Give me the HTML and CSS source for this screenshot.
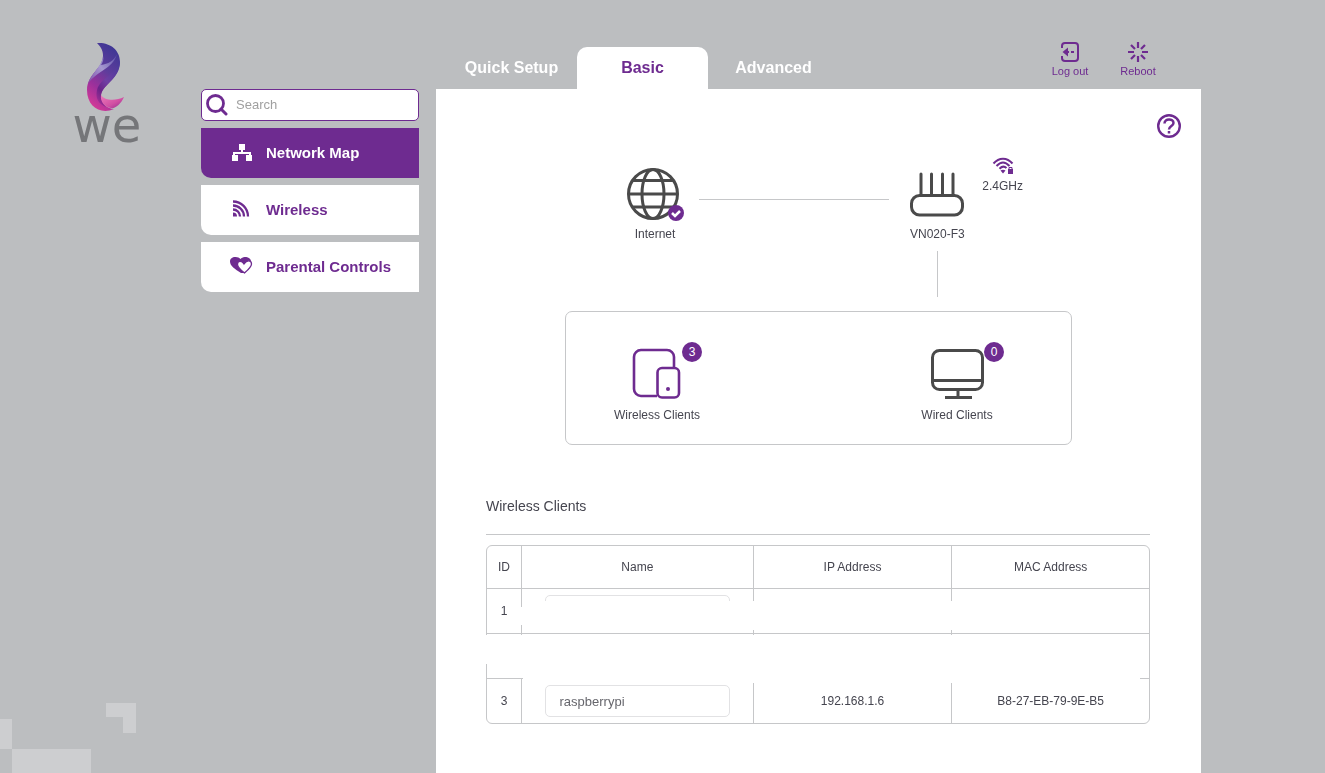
FILE: index.html
```html
<!DOCTYPE html>
<html lang="en">
<head>
<meta charset="utf-8">
<title>Network Map</title>
<link rel="stylesheet" href="styles.css">
</head>
<body>
<svg class="backdrop" width="140" height="72" viewBox="0 0 140 72" aria-hidden="true"><path d="M0 18h12v30H0zM12 48h79v24H12zM106 2h30v30h-13V16h-17z" fill="#cdced0"/></svg>
<div class="page">
  <div class="logo">
    <svg width="42" height="70" viewBox="0 0 42 70" aria-hidden="true">
      <defs>
        <linearGradient id="flame" x1="0.7" y1="0" x2="0.3" y2="1">
          <stop offset="0" stop-color="#3d3694"/><stop offset="0.4" stop-color="#5f3d9c"/><stop offset="0.7" stop-color="#9c309b"/><stop offset="1" stop-color="#d63a97"/>
        </linearGradient>
        <linearGradient id="fold" x1="1" y1="0" x2="0" y2="1">
          <stop offset="0" stop-color="#5a4ca6"/><stop offset="0.5" stop-color="#a698d0"/><stop offset="1" stop-color="#7d4aa8"/>
        </linearGradient>
        <linearGradient id="core" x1="0.8" y1="0" x2="0.2" y2="1">
          <stop offset="0" stop-color="#4a3a9a"/><stop offset="0.5" stop-color="#6f3fa3"/><stop offset="0.75" stop-color="#6a2389"/><stop offset="1" stop-color="#a32f96"/>
        </linearGradient>
        <linearGradient id="tail" x1="0" y1="0" x2="1" y2="1">
          <stop offset="0" stop-color="#ee7abb"/><stop offset="0.6" stop-color="#d14fa3"/><stop offset="1" stop-color="#8c2b8d"/>
        </linearGradient>
      </defs>
      <path d="M11 1C24 0 34 8 34 20C34 37 17 42 15 53C15 62 22 67 28 67C15 73 1 65 1 48C1 32 18 26 17 13C17 8 14 4 11 1Z" fill="url(#flame)"/>
      <path d="M17 14C16 25 5 31 2 42C10 29 27 27 31 12C28 19 22 22 15 23C17 20 18 17 17 14Z" fill="url(#fold)"/>
      <path d="M34 18C34 37 17 42 15 53C15 59 17 62 20 65C13 62 9 57 11 48C14 36 30 33 34 18Z" fill="url(#core)"/>
      <path d="M15 53C19 59 30 59 38 55C35 62 29 67 25 66C19 65 14 60 15 53Z" fill="url(#tail)"/>
    </svg>
    <span class="logo-word">we</span>
  </div>

  <aside class="sidebar">
    <label class="search">
      <svg width="22" height="22" viewBox="0 0 22 22" fill="none" stroke="#6e2b90" aria-hidden="true"><circle cx="9.500" cy="9.500" r="8" stroke-width="2.800"/><path d="M15 15l5 5" stroke-width="3" stroke-linecap="round"/></svg>
      <input type="text" placeholder="Search" aria-label="Search">
    </label>
    <nav class="menu">
      <a class="menu-item active" href="#map">
        <svg width="24" height="20" viewBox="0 0 24 20" fill="currentColor" aria-hidden="true"><path d="M9 1h6v6h-2v2h8v3h1v6h-6v-6h3v-1H5v1h3v6H2v-6h1V9h8V7H9z"/></svg>
        <span>Network Map</span>
      </a>
      <a class="menu-item" href="#wireless">
        <svg width="24" height="20" viewBox="0 0 24 20" fill="none" stroke="currentColor" stroke-width="2.300" aria-hidden="true"><path d="M3 1.500A15 15 0 0 1 18 16.500M3 5.500A11 11 0 0 1 14 16.500M3 9.500A7 7 0 0 1 10 16.500"/><path d="M3 12.500a4 4 0 0 1 4 4H3z" fill="currentColor" stroke="none"/></svg>
        <span>Wireless</span>
      </a>
      <a class="menu-item" href="#parental">
        <svg width="24" height="20" viewBox="0 0 24 20" aria-hidden="true"><path d="M11 16C5 12 0 9 0 4.500C0-1 8-1 10.500 2C13-1 20-1 21 4L15 16Z" fill="currentColor"/><path d="M14.500 16C10 12.500 7.500 10 7.500 7.200C7.500 3.500 12 3.500 14 7C17 2.500 21.500 3 21.500 7C21.500 10 18.500 12.500 14.500 16Z" fill="#fff" stroke="currentColor" stroke-width="1.300"/></svg>
        <span>Parental Controls</span>
      </a>
    </nav>
  </aside>

  <div class="main">
    <header class="topbar">
      <nav class="tabs">
        <a class="tab" href="#quick">Quick Setup</a>
        <a class="tab active" href="#basic">Basic</a>
        <a class="tab" href="#advanced">Advanced</a>
      </nav>
      <div class="actions">
        <button class="action" type="button">
          <svg width="20" height="22" viewBox="0 0 20 22" fill="none" stroke="currentColor" stroke-width="2" aria-hidden="true"><path d="M2 7V5a3 3 0 0 1 3-3h10a3 3 0 0 1 3 3v12a3 3 0 0 1-3 3H5a3 3 0 0 1-3-3v-2M7 11h2M11 11h3"/><path d="M8 6.500v9L2.500 11z" fill="currentColor" stroke="none"/></svg>
          <span>Log out</span>
        </button>
        <button class="action" type="button">
          <svg width="20" height="22" viewBox="0 0 20 22" fill="none" stroke="currentColor" stroke-width="2.200" aria-hidden="true"><path d="M10 1v6M10 15v6M0 11h6M14 11h6M3 4l4 4M13 14l4 4M17 4l-4 4M7 14l-4 4"/></svg>
          <span>Reboot</span>
        </button>
      </div>
    </header>

    <main class="panel">
      <button class="help" type="button" aria-label="Help">
        <svg width="24" height="24" viewBox="0 0 24 24" fill="none" stroke="currentColor" aria-hidden="true"><circle cx="12" cy="12" r="10.800" stroke-width="2.400"/><path d="M7.500 9.500C7.500 4.200 16.500 4.200 16.500 9C16.500 12 12 12 12 15.500" stroke-width="2.500"/><path d="M12 17v2.500" stroke-width="2.500"/></svg>
      </button>

      <section class="map">
        <div class="link-row">
          <div class="node internet">
            <svg width="60" height="54" viewBox="0 0 60 54" fill="none" stroke="#4a4a4a" stroke-width="3" aria-hidden="true"><circle cx="28" cy="26" r="24.500"/><ellipse cx="28" cy="26" rx="11" ry="24.500"/><path d="M3 26h50M8 12.500h40M8 39h40"/><circle cx="51" cy="45" r="8" fill="#6e2b90" stroke="none"/><path d="M47 45l3 3 5-5" stroke="#fff" stroke-width="2.500"/></svg>
            <span>Internet</span>
          </div>
          <div class="wire"></div>
          <div class="node router">
            <svg width="54" height="54" viewBox="0 0 54 54" fill="none" stroke="#4a4a4a" stroke-width="3" aria-hidden="true"><rect x="1.500" y="27.500" width="51" height="19.500" rx="8"/><path d="M11 6v20M21.500 6v20M32.500 6v20M43 6v20" stroke-linecap="round"/></svg>
            <span>VN020-F3</span>
            <div class="drop"></div>
          </div>
          <div class="node band">
            <svg width="22" height="18" viewBox="0 0 22 18" fill="none" stroke="#6e2b90" stroke-width="2" aria-hidden="true"><path d="M1.500 6.500C7 0 15 0 20.500 6.500M4.500 9C9 4.200 13 4.200 17.500 9M7.500 11.700C10 9.200 12.500 9.200 14.500 11"/><path d="M8.500 13.500c1.500-1 3.500-1 5 0L11 16.500z" fill="#6e2b90" stroke="none"/><rect x="16" y="12" width="5" height="5" fill="#6e2b90" stroke="none"/><path d="M17 12v-1.500h3V12" stroke-width="1"/></svg>
            <span>2.4GHz</span>
          </div>
        </div>

        <div class="clients">
          <a class="client" href="#wireless-clients">
            <span class="client-icon">
              <svg width="50" height="52" viewBox="0 0 50 52" fill="none" stroke="#6e2b90" stroke-width="2.600" aria-hidden="true"><path d="M25 48H9a7 7 0 0 1-7-7V9a7 7 0 0 1 7-7h26a7 7 0 0 1 7 7v11"/><rect x="25.500" y="20" width="21.500" height="29.500" rx="4.500"/><circle cx="36" cy="41" r="2" fill="#6e2b90" stroke="none"/></svg>
              <span class="badge">3</span>
            </span>
            <span>Wireless Clients</span>
          </a>
          <a class="client" href="#wired-clients">
            <span class="client-icon">
              <svg width="54" height="52" viewBox="0 0 54 52" fill="none" stroke="#4a4a4a" stroke-width="3" aria-hidden="true"><rect x="2.500" y="2.500" width="50" height="39" rx="7"/><path d="M3 32.500h50M28 42v7M15 49.500h27"/></svg>
              <span class="badge">0</span>
            </span>
            <span>Wired Clients</span>
          </a>
        </div>
      </section>

      <section class="list" id="wireless-clients">
        <h2>Wireless Clients</h2>
        <div class="table-wrap">
          <table>
            <thead>
              <tr><th class="col-id">ID</th><th class="col-name">Name</th><th class="col-ip">IP Address</th><th>MAC Address</th></tr>
            </thead>
            <tbody>
              <tr><td>1</td><td><input type="text" aria-label="Name of client 1"></td><td></td><td></td></tr>
              <tr><td></td><td></td><td></td><td></td></tr>
              <tr><td>3</td><td><input type="text" value="raspberrypi" aria-label="Name of client 3"></td><td>192.168.1.6</td><td>B8-27-EB-79-9E-B5</td></tr>
            </tbody>
          </table>
          <div class="cover cover-first"></div>
          <div class="cover cover-first-edge"></div>
          <div class="cover cover-second"></div>
          <div class="cover cover-second-inner"></div>
          <div class="cover cover-second-base"></div>
        </div>
      </section>
    </main>
  </div>
</div>
</body>
</html>
```
FILE: styles.css
```css
* { box-sizing: border-box; }

body {
  margin: 0;
  background: #bcbec0;
  color: #45454f;
  font-family: "Liberation Sans", Arial, sans-serif;
  font-size: 12px;
  line-height: 16px;
}

a { color: inherit; text-decoration: none; }
button { font: inherit; border: 0; padding: 0; background: none; color: #6e2b90; cursor: pointer; }
svg { display: block; flex: none; }

.backdrop { position: fixed; left: 0; bottom: 0; }

.page {
  position: relative;
  display: flex;
  min-height: 100vh;
  padding: 0 124px 0 73px;
}

.logo {
  display: flex;
  flex-direction: column;
  align-items: center;
  flex: none;
  width: 68px;
  padding-top: 42px;
}
.logo-word {
  color: #757679;
  font-family: "DejaVu Sans", sans-serif;
  font-size: 48px;
  line-height: 26px;
}

.sidebar { flex: none; width: 218px; margin: 89px 17px 0 60px; }

.search {
  display: flex;
  align-items: center;
  gap: 8px;
  height: 32px;
  padding: 0 4px;
  background: #fff;
  border: 1px solid #6e2b90;
  border-radius: 5px;
}
.search input {
  flex: 1;
  min-width: 0;
  padding: 0;
  border: 0;
  outline: 0;
  background: none;
  font: inherit;
  font-size: 13px;
}
.search input::placeholder { color: #a0a0a0; }

.menu { display: flex; flex-direction: column; gap: 7px; margin-top: 7px; }
.menu-item {
  display: flex;
  align-items: center;
  gap: 12px;
  height: 50px;
  padding-left: 29px;
  background: #fff;
  border-bottom-left-radius: 10px;
  color: #6e2b90;
  font-size: 15px;
  font-weight: bold;
}
.menu-item.active { background: #6e2b90; color: #fff; }

.main { display: flex; flex-direction: column; flex: 1; min-width: 0; }

.topbar {
  display: flex;
  align-items: flex-end;
  justify-content: space-between;
  height: 89px;
  padding-right: 39px;
}
.tabs { display: flex; padding-left: 10px; }
.tab {
  width: 131px;
  color: #fff;
  font-size: 16px;
  font-weight: bold;
  line-height: 42px;
  text-align: center;
}
.tab.active { background: #fff; border-radius: 10px 10px 0 0; color: #6e2b90; }

.actions { display: flex; gap: 20px; padding-bottom: 10px; }
.action {
  display: flex;
  flex-direction: column;
  align-items: center;
  width: 48px;
  font-size: 11px;
}

.panel {
  position: relative;
  flex: 1;
  padding: 68px 51px 49px 50px;
  background: #fff;
}
.help { position: absolute; top: 25px; right: 20px; }

.map { width: 508px; margin: 0 auto; padding-left: 1px; }
.link-row { display: flex; align-items: flex-start; padding: 0 49px 0 60px; }
.node { display: flex; flex-direction: column; align-items: center; gap: 4px; flex: none; }
.internet, .router { padding-top: 11px; }
.wire { flex: 1; height: 1px; margin: 42px 21px 0 14px; background: #c6c7c9; }
.router { width: 54px; white-space: nowrap; }
.drop { width: 1px; height: 46px; margin-top: 5px; background: #c6c7c9; }
.band { gap: 3px; margin-left: 18px; }

.clients {
  display: flex;
  justify-content: space-between;
  margin-top: 14px;
  padding: 36px 64px 21px 41px;
  border: 1px solid #c6c7c9;
  border-radius: 7px;
}
.client {
  display: flex;
  flex-direction: column;
  align-items: center;
  gap: 7px;
  width: 100px;
}
.client-icon { position: relative; }
.badge {
  position: absolute;
  top: -6px;
  left: 100%;
  width: 20px;
  border-radius: 50%;
  background: #6e2b90;
  color: #fff;
  line-height: 20px;
  text-align: center;
}

h2 {
  margin: 51px 0 10px;
  padding-bottom: 18px;
  border-bottom: 1px solid #c6c7c9;
  font-size: 14px;
  font-weight: normal;
  line-height: 20px;
}

.table-wrap { position: relative; }
table {
  width: 100%;
  table-layout: fixed;
  border: 1px solid #c6c7c9;
  border-radius: 6px;
  border-spacing: 0;
  text-align: center;
}
th, td {
  height: 45px;
  padding: 0;
  border-right: 1px solid #c6c7c9;
  border-bottom: 1px solid #c6c7c9;
  font-weight: normal;
}
th { height: 43px; }
th:last-child, td:last-child { border-right: 0; }
tbody tr:last-child td { height: 44px; border-bottom: 0; }
.col-id { width: 35px; }
.col-name { width: 35%; }
.col-ip { width: 30%; }
td input {
  width: calc(100% - 45px);
  height: 32px;
  padding: 0 14px;
  border: 1px solid #e2e2e4;
  border-radius: 5px;
  background: #fff;
  color: #66666c;
  font: inherit;
  font-size: 13px;
  vertical-align: middle;
}

.cover { position: absolute; right: 10px; background: #fff; }
.cover-first { top: 56px; left: 37px; right: 2px; height: 29px; }
.cover-first-edge { top: 62px; left: 33px; right: auto; width: 10px; height: 18px; }
.cover-second { top: 90px; left: 0; height: 29px; }
.cover-second-inner { top: 119px; left: 2px; height: 14px; }
.cover-second-base { top: 132px; left: 37px; height: 6px; }
```
